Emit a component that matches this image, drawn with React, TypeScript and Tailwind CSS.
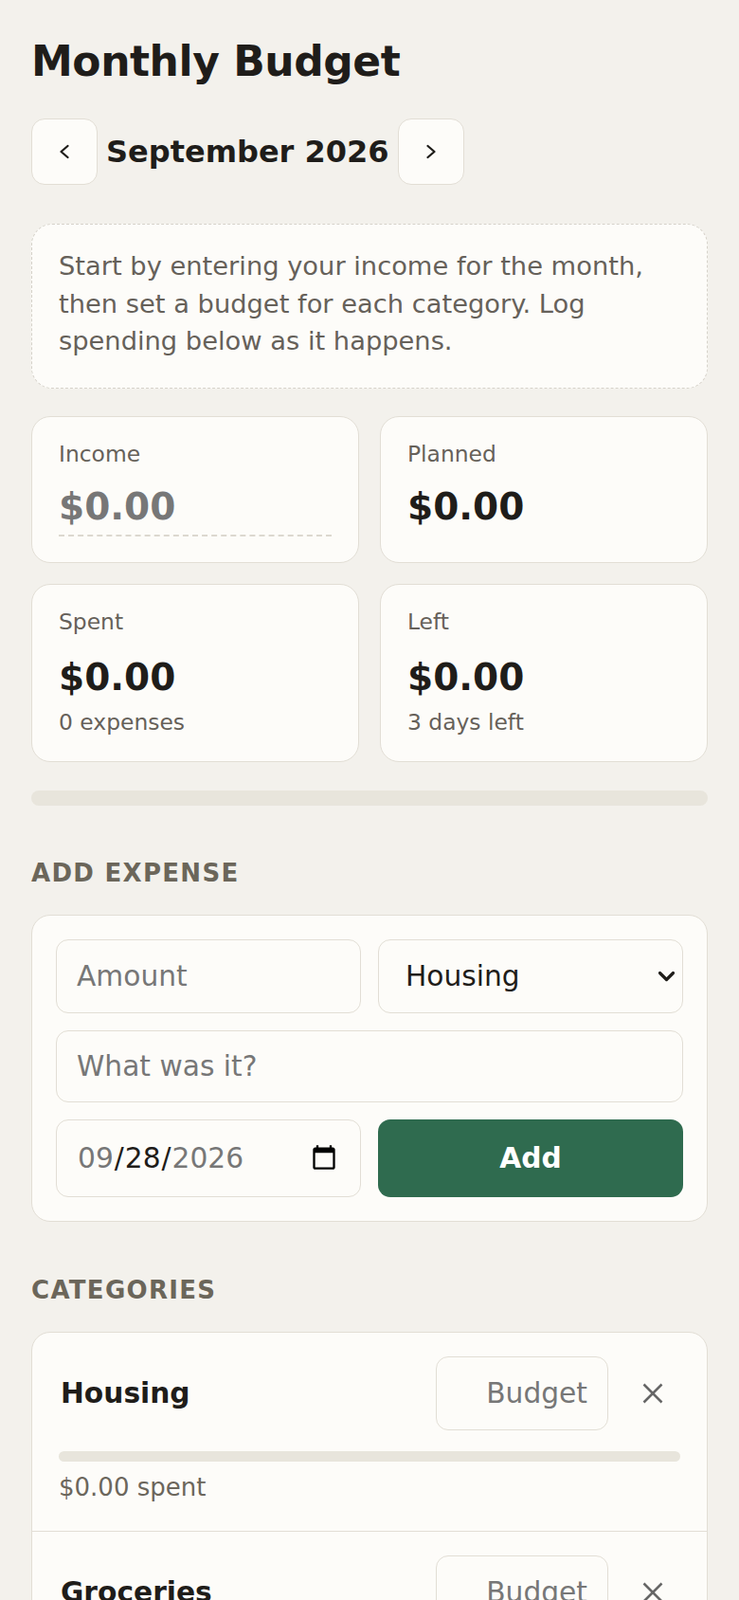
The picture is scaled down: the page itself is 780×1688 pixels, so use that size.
import { useState } from 'react'

const categories = ['Housing', 'Groceries', 'Transport', 'Utilities', 'Dining Out', 'Other']

function Chevron({ dir }: { dir: 'left' | 'right' }) {
    return (
        <svg width="12" height="16" viewBox="0 0 12 16" fill="none" stroke="currentColor" strokeWidth="2.3" strokeLinecap="round" strokeLinejoin="round">
            {dir === 'left' ? <polyline points="9.5,2 2.5,8 9.5,14" /> : <polyline points="2.5,2 9.5,8 2.5,14" />}
        </svg>
    )
}

function XIcon() {
    return (
        <svg width="22" height="22" viewBox="0 0 22 22" fill="none" stroke="currentColor" strokeWidth="2.5">
            <line x1="1.5" y1="1.5" x2="20.5" y2="20.5" />
            <line x1="20.5" y1="1.5" x2="1.5" y2="20.5" />
        </svg>
    )
}

const inputCls = "w-full rounded-[13px] border border-[#e2ded5] bg-[#fdfcf9] px-[21px] text-[29.7px] text-[#1f1d1a] placeholder:text-[#777] outline-none"

export default function App() {
    const [category, setCategory] = useState('Housing')
    const [date, setDate] = useState('2026-09-28')

    return (
        <div className="min-h-screen bg-[#f3f1ec] px-[33px] pt-[38px] pb-[48px] text-[#1f1d1a] font-['DejaVu_Sans',sans-serif]">
            <h1 className="text-[44px] leading-[53px] font-bold tracking-[-0.01em]">Monthly Budget</h1>

            <div className="mt-[34px] flex items-center gap-[9px]">
                <button className="flex h-[70px] w-[70px] items-center justify-center rounded-[14px] border border-[#e2ded5] bg-[#fdfcf9]">
                    <Chevron dir="left" />
                </button>
                <span className="text-[32px] leading-[40px] font-bold">September 2026</span>
                <button className="flex h-[70px] w-[70px] items-center justify-center rounded-[14px] border border-[#e2ded5] bg-[#fdfcf9]">
                    <Chevron dir="right" />
                </button>
            </div>

            <div className="mt-[41px] rounded-[22px] border border-dashed border-[#d6d2ca] bg-[#fdfcf9] px-[28px] pt-[24px] pb-[29px]">
                <p className="text-[27.3px] leading-[39.6px] text-[#66615a]">
                    Start by entering your income for the month, then set a budget for each category. Log spending below as it happens.
                </p>
            </div>

            <div className="mt-[29px] grid grid-cols-2 gap-[22px]">
                <div className="rounded-[20px] border border-[#e2ded5] bg-[#fdfcf9] px-[28px] pt-[22px] pb-[27px]">
                    <div className="text-[23.4px] leading-[35px] text-[#66615a]">Income</div>
                    <input
                        placeholder="$0.00"
                        className="mt-[8px] h-[61px] w-full border-b-2 border-dashed border-[#dcd8cf] bg-transparent text-[39px] font-bold text-[#1f1d1a] placeholder:text-[#777] outline-none"
                    />
                </div>
                <div className="rounded-[20px] border border-[#e2ded5] bg-[#fdfcf9] px-[28px] pt-[22px] pb-[27px]">
                    <div className="text-[23.4px] leading-[35px] text-[#66615a]">Planned</div>
                    <div className="mt-[14px] text-[39px] leading-[47px] font-bold">$0.00</div>
                </div>
                <div className="rounded-[20px] border border-[#e2ded5] bg-[#fdfcf9] px-[28px] pt-[22px] pb-[23px]">
                    <div className="text-[23.4px] leading-[35px] text-[#66615a]">Spent</div>
                    <div className="mt-[17px] text-[39px] leading-[47px] font-bold">$0.00</div>
                    <div className="mt-[7px] text-[23.4px] leading-[35px] text-[#66615a]">0 expenses</div>
                </div>
                <div className="rounded-[20px] border border-[#e2ded5] bg-[#fdfcf9] px-[28px] pt-[22px] pb-[23px]">
                    <div className="text-[23.4px] leading-[35px] text-[#66615a]">Left</div>
                    <div className="mt-[17px] text-[39px] leading-[47px] font-bold">$0.00</div>
                    <div className="mt-[7px] text-[23.4px] leading-[35px] text-[#66615a]">3 days left</div>
                </div>
            </div>

            <div className="mt-[30px] h-[16px] rounded-full bg-[#e8e5dc]" />

            <h2 className="mt-[52px] text-[26px] leading-[39px] font-bold tracking-[0.05em] text-[#6b665a]">ADD EXPENSE</h2>
            <div className="mt-[24px] rounded-[20px] border border-[#e2ded5] bg-[#fdfcf9] p-[25px]">
                <div className="grid grid-cols-2 gap-[18px]">
                    <input placeholder="Amount" inputMode="decimal" className={`h-[78px] ${inputCls}`} />
                    <div className="relative">
                        <select
                            value={category}
                            onChange={(e) => setCategory(e.target.value)}
                            className={`h-[78px] appearance-none !pl-[28px] ${inputCls}`}
                        >
                            {categories.map((c) => (
                                <option key={c}>{c}</option>
                            ))}
                        </select>
                        <svg
                            className="pointer-events-none absolute right-[8px] top-1/2 -translate-y-1/2 text-[#1f1d1a]"
                            width="19" height="12" viewBox="0 0 19 12" fill="none" stroke="currentColor" strokeWidth="3.2" strokeLinecap="round" strokeLinejoin="round"
                        >
                            <polyline points="2.5,2.5 9.5,9.5 16.5,2.5" />
                        </svg>
                    </div>
                    <input placeholder="What was it?" className={`col-span-2 h-[76px] ${inputCls}`} />
                    <input
                        type="date"
                        value={date}
                        onChange={(e) => setDate(e.target.value)}
                        className={`h-[82px] [&::-webkit-datetime-edit-month-field]:text-[#777] [&::-webkit-datetime-edit-year-field]:text-[#777] ${inputCls}`}
                    />
                    <button className="rounded-[13px] bg-[#2f6b4f] text-[29.7px] font-bold text-white">Add</button>
                </div>
            </div>

            <h2 className="mt-[53px] text-[26px] leading-[39px] font-bold tracking-[0.05em] text-[#6b665a]">CATEGORIES</h2>
            <div className="mt-[24px] overflow-hidden rounded-[20px] border border-[#e2ded5] bg-[#fdfcf9]">
                {categories.map((c, i) => (
                    <div key={c} className={`px-[28px] pt-[25px] pb-[26px] ${i > 0 ? 'border-t border-[#e2ded5]' : ''}`}>
                        <div className="flex items-center gap-[18px]">
                            <span className="ml-[2px] flex-1 text-[29.7px] font-bold">{c}</span>
                            <input placeholder="Budget" className={`h-[78px] !w-[182px] text-right ${inputCls}`} />
                            <button className="flex h-[58px] w-[58px] items-center justify-center text-[#666]">
                                <XIcon />
                            </button>
                        </div>
                        <div className="mt-[22px] h-[11px] rounded-full bg-[#e8e5dc]" />
                        <p className="mt-[8px] text-[26px] leading-[39px] text-[#6b665c]">$0.00 spent</p>
                    </div>
                ))}
            </div>
        </div>
    )
}
